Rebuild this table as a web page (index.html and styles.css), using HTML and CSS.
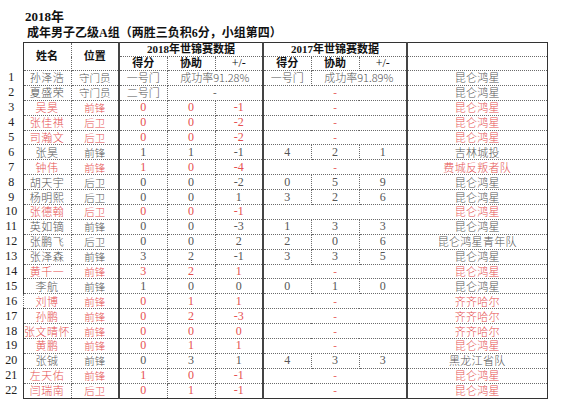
FILE: index.html
```html
<!DOCTYPE html>
<html lang="zh">
<head>
<meta charset="utf-8">
<title>2018年 成年男子乙级A组</title>
<link rel="stylesheet" href="styles.css">
</head>
<body>
<div class="titles">
  <div class="t1">2018年</div>
  <div class="t2">成年男子乙级A组（两胜三负积6分，小组第四）</div>
</div>
<table class="sheet">
  <colgroup>
    <col class="c-n"><col class="c-w"><col class="c-w"><col class="c-w"><col class="c-w"><col class="c-w"><col class="c-w"><col class="c-w"><col class="c-w"><col class="c-tm">
  </colgroup>
  <tr class="h1">
    <td class="n" rowspan="2"></td>
    <td class="hd L T" rowspan="2">姓名</td>
    <td class="hd T" rowspan="2">位置</td>
    <td class="hd T A" colspan="3">2018年世锦赛数据</td>
    <td class="hd T A" colspan="3">2017年世锦赛数据</td>
    <td class="hd T A R"></td>
  </tr>
  <tr class="h2">
    <td class="hd A">得分</td><td class="hd">协助</td><td class="hd pm">+/-</td>
    <td class="hd A">得分</td><td class="hd">协助</td><td class="hd pm">+/-</td>
    <td class="hd A R"></td>
  </tr>
  <tr class="g"><td class="n">1</td><td class="nm L">孙泽浩</td><td class="ps">守门员</td><td class="A cj">一号门</td><td class="cj" colspan="2">成功率91.28%</td><td class="A cj">一号门</td><td class="cj" colspan="2">成功率91.89%</td><td class="A tm R">昆仑鸿星</td></tr>
  <tr class="g"><td class="n">2</td><td class="nm L">夏盛荣</td><td class="ps">守门员</td><td class="A cj">二号门</td><td class="dash" colspan="2">-</td><td class="A dash red" colspan="3">-</td><td class="A tm R">昆仑鸿星</td></tr>
  <tr class="red"><td class="n">3</td><td class="nm L">吴昊</td><td class="ps">前锋</td><td class="A">0</td><td>0</td><td>-1</td><td class="A dash" colspan="3">-</td><td class="A tm R">昆仑鸿星</td></tr>
  <tr class="red"><td class="n">4</td><td class="nm L">张佳祺</td><td class="ps">后卫</td><td class="A">0</td><td>0</td><td>-2</td><td class="A dash" colspan="3">-</td><td class="A tm R">昆仑鸿星</td></tr>
  <tr class="red"><td class="n">5</td><td class="nm L">司瀚文</td><td class="ps">后卫</td><td class="A">0</td><td>0</td><td>-2</td><td class="A dash" colspan="3">-</td><td class="A tm R">昆仑鸿星</td></tr>
  <tr class="g"><td class="n">6</td><td class="nm L">张昊</td><td class="ps">前锋</td><td class="A">1</td><td>1</td><td>-1</td><td class="A">4</td><td>2</td><td>1</td><td class="A tm R">吉林城投</td></tr>
  <tr class="red"><td class="n">7</td><td class="nm L">钟伟</td><td class="ps">前锋</td><td class="A">1</td><td>0</td><td>-4</td><td class="A dash" colspan="3">-</td><td class="A tm R">费城反叛者队</td></tr>
  <tr class="g"><td class="n">8</td><td class="nm L">胡天宇</td><td class="ps">后卫</td><td class="A">0</td><td>0</td><td>-2</td><td class="A">0</td><td>5</td><td>9</td><td class="A tm R">昆仑鸿星</td></tr>
  <tr class="g"><td class="n">9</td><td class="nm L">杨明熙</td><td class="ps">后卫</td><td class="A">0</td><td>0</td><td>1</td><td class="A">3</td><td>2</td><td>6</td><td class="A tm R">昆仑鸿星</td></tr>
  <tr class="red"><td class="n">10</td><td class="nm L">张德翰</td><td class="ps">后卫</td><td class="A">0</td><td>0</td><td>-1</td><td class="A dash" colspan="3"></td><td class="A tm R">昆仑鸿星</td></tr>
  <tr class="g"><td class="n">11</td><td class="nm L">英如镝</td><td class="ps">前锋</td><td class="A">0</td><td>0</td><td>-3</td><td class="A">1</td><td>3</td><td>3</td><td class="A tm R">昆仑鸿星</td></tr>
  <tr class="g"><td class="n">12</td><td class="nm L">张鹏飞</td><td class="ps">后卫</td><td class="A">0</td><td>0</td><td>2</td><td class="A">2</td><td>0</td><td>6</td><td class="A tm R">昆仑鸿星青年队</td></tr>
  <tr class="g"><td class="n">13</td><td class="nm L">张泽森</td><td class="ps">前锋</td><td class="A">3</td><td>2</td><td>-1</td><td class="A">3</td><td>3</td><td>5</td><td class="A tm R">昆仑鸿星</td></tr>
  <tr class="red"><td class="n">14</td><td class="nm L">黄千一</td><td class="ps">前锋</td><td class="A">3</td><td>2</td><td>1</td><td class="A dash" colspan="3">-</td><td class="A tm R">昆仑鸿星</td></tr>
  <tr class="g"><td class="n">15</td><td class="nm L">李航</td><td class="ps">前锋</td><td class="A">1</td><td>0</td><td>0</td><td class="A">0</td><td>1</td><td>0</td><td class="A tm R">昆仑鸿星</td></tr>
  <tr class="red"><td class="n">16</td><td class="nm">刘博</td><td class="ps">前锋</td><td class="A">0</td><td>1</td><td>1</td><td class="A dash" colspan="3">-</td><td class="A tm R">齐齐哈尔</td></tr>
  <tr class="red"><td class="n">17</td><td class="nm L">孙鹏</td><td class="ps">前锋</td><td class="A">0</td><td>2</td><td>-3</td><td class="A dash" colspan="3">-</td><td class="A tm R">齐齐哈尔</td></tr>
  <tr class="red"><td class="n">18</td><td class="nm L">张文晴怀</td><td class="ps">前锋</td><td class="A">0</td><td>0</td><td>0</td><td class="A dash" colspan="3">-</td><td class="A tm R">齐齐哈尔</td></tr>
  <tr class="red"><td class="n">19</td><td class="nm L">黄鹏</td><td class="ps">前锋</td><td class="A">0</td><td>1</td><td>1</td><td class="A dash" colspan="3">-</td><td class="A tm R">昆仑鸿星</td></tr>
  <tr class="g"><td class="n">20</td><td class="nm L">张铖</td><td class="ps">前锋</td><td class="A">0</td><td>3</td><td>1</td><td class="A">4</td><td>3</td><td>3</td><td class="A tm R">黑龙江省队</td></tr>
  <tr class="red"><td class="n">21</td><td class="nm L">左天佑</td><td class="ps">前锋</td><td class="A">1</td><td>0</td><td>-1</td><td class="A dash" colspan="3">-</td><td class="A tm R">昆仑鸿星</td></tr>
  <tr class="red last"><td class="n">22</td><td class="nm L">闫瑞南</td><td class="ps">后卫</td><td class="A">0</td><td>1</td><td>-1</td><td class="A dash" colspan="3">-</td><td class="A tm R">昆仑鸿星</td></tr>
</table>
</body>
</html>
```

FILE: styles.css
```css
html, body {
  margin: 0;
  padding: 0;
  background: #ffffff;
}
body {
  font-family: "Liberation Serif", "Noto Sans CJK SC", serif;
  color: #222;
}
.titles {
  padding: 8px 0 0 25px;
}
.t1, .t2 {
  height: 17px;
  line-height: 17px;
  font-size: 12px;
  font-weight: bold;
  color: #111;
  white-space: nowrap;
}
.t1 {
  font-size: 13px;
}
.t2 {
  padding-left: 2px;
}
.sheet {
  border-collapse: collapse;
  table-layout: fixed;
  width: 547px;
}
.c-n { width: 23px; }
.c-w { width: 48px; }
.c-tm { width: 140px; }
.sheet td {
  padding: 0;
  height: 13px;
  line-height: 13px;
  text-align: center;
  vertical-align: middle;
  white-space: nowrap;
  overflow: hidden;
  border: 1px dotted #6a6a6a;
  font-size: 12px;
  font-family: "Liberation Serif", "Noto Sans CJK SC", serif;
}
.sheet tr.g td, .sheet tr.red td { height: 13.9px; }
.sheet td.n {
  border: none;
  color: #222;
  font-size: 12px;
}
.sheet td.hd {
  font-weight: bold;
  font-size: 11px;
  color: #111;
}
.sheet td.pm {
  font-size: 12px;
  font-weight: normal;
}
.sheet td.nm, .sheet td.ps, .sheet td.tm, .sheet td.cj {
  font-family: "Noto Sans CJK SC", sans-serif;
  font-size: 11px;
  font-weight: 300;
}
.sheet td.nm { letter-spacing: 0.5px; }
.sheet td.ps { font-size: 10.5px; }
.sheet td.tm { letter-spacing: 0.3px; }
.sheet td.dash { font-size: 11px; }
.sheet td.L { border-left: 1px solid #333; }
.sheet td.R { border-right: 1.5px solid #333; }
.sheet td.T { border-top: 1.5px solid #333; }
.sheet td.A { border-left: 2px solid #444; }
.sheet tr.last td { border-bottom: 1.5px solid #333; }
.sheet tr.last td.n { border-bottom: none; }
tr.g td { color: #555; }
tr.g td.n, tr.red td.n { color: #222; }
tr.red td, td.red { color: #e65050; }
tr.g td.red { color: #e65050; }
```
